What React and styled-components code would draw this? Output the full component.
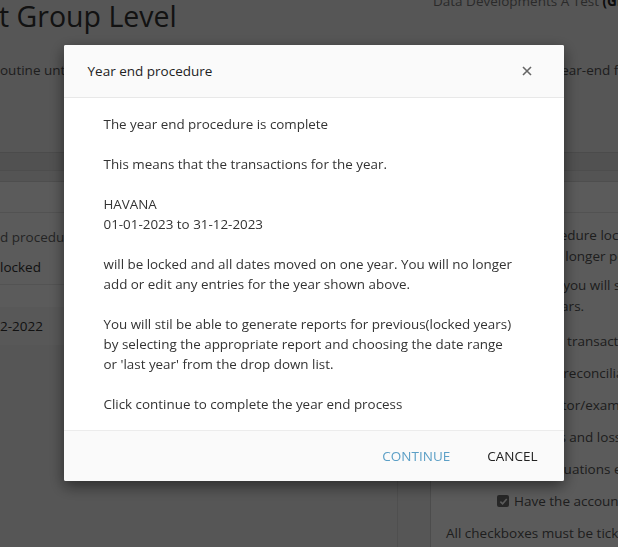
import React from 'react'
import styled, { createGlobalStyle } from 'styled-components'

const GlobalStyle = createGlobalStyle`
  html, body {
    margin: 0;
    padding: 0;
  }
  body {
    font-family: "Open Sans", "Liberation Sans", sans-serif;
    background: #f0f0f0;
    overflow: hidden;
  }
`

const Page = styled.div`
  width: 618px;
  height: 547px;
  overflow: hidden;
  background: #f0f0f0;
  color: #333;
  display: flex;
  flex-direction: column;
`

const TopBar = styled.div`
  height: 45px;
  flex: none;
  display: flex;
  justify-content: space-between;
  align-items: flex-start;
`

const PageTitle = styled.h1`
  margin: 0 0 0 -1px;
  font-size: 28.5px;
  font-weight: 400;
  line-height: 33px;
  color: #333;
  white-space: nowrap;
`

const Company = styled.div`
  width: 185px;
  margin-top: -9px;
  font-size: 13.5px;
  line-height: 20px;
  color: #777;
  white-space: nowrap;
  overflow: hidden;

  b {
    color: #222;
  }
`

const Intro = styled.div`
  height: 107px;
  flex: none;
  box-sizing: border-box;
  padding-top: 15px;
  display: grid;
  grid-template-columns: 466px 1fr;
  font-size: 13.5px;
  line-height: 20px;
  color: #555;
  white-space: nowrap;
  overflow: hidden;
`

const TabStrip = styled.div`
  height: 30px;
  flex: none;
  box-sizing: border-box;
  border-top: 1px solid #d2d2d2;
  border-bottom: 1px solid #dadada;
  background: linear-gradient(#e3e3e3 0 17px, #d9d9d9 17px 18px, #ececec 18px);
`

const Columns = styled.div`
  flex: 1;
  display: grid;
  grid-template-columns: 398px 32px 1fr;
  min-height: 0;
`

const LeftCol = styled.div`
  border-right: 1px solid #dcdcdc;
`

const Card = styled.div`
  background: #fff;
  font-size: 13.5px;
  color: #444;
  white-space: nowrap;
  overflow: hidden;
`

const CardHead = styled.div`
  height: 30px;
  border-bottom: 1px solid #e6e6e6;
`

const Row = styled.div`
  height: ${p => p.$h}px;
  line-height: ${p => p.$h}px;
  margin-top: ${p => p.$top || 0}px;
  background: ${p => (p.$shade ? '#f7f7f7' : 'transparent')};
  border-bottom: ${p => (p.$line ? '1px solid #e8e8e8' : 'none')};
  color: ${p => (p.$muted ? '#666' : '#333')};
`

const RightPanel = styled.div`
  background: #fff;
  border-left: 1px solid #d6d6d6;
  white-space: nowrap;
  overflow: hidden;
  font-size: 13.5px;
  color: #555;
`

const PanelHead = styled.div`
  height: 30px;
  border-bottom: 1px solid #e6e6e6;
`

const PanelText = styled.div`
  padding: 12px 0 0 15px;
  line-height: 21px;
`

const Para = styled.p`
  margin: 0 0 8px;
`

const CheckList = styled.div`
  margin-top: 7px;
`

const CheckItem = styled.label`
  display: flex;
  align-items: center;
  gap: 5px;
  height: 32px;
  padding-left: 51px;
`

const Box = styled.span`
  width: 12px;
  height: 12px;
  flex: none;
  border-radius: 2px;
  background: #6d6d6d;
  display: flex;
  align-items: center;
  justify-content: center;
`

const Note = styled.div`
  height: 32px;
  line-height: 32px;
`

const Overlay = styled.div`
  position: fixed;
  inset: 0;
  background: rgba(0, 0, 0, 0.645);
  display: flex;
  justify-content: center;
  align-items: flex-start;
  padding: 45px 0 0 9px;
`

const Modal = styled.div`
  width: 500px;
  background: #fff;
  border-radius: 2px;
  box-shadow: 0 5px 15px rgba(0, 0, 0, 0.5);
  overflow: hidden;
  color: #333;
`

const ModalHeader = styled.div`
  height: 53px;
  box-sizing: border-box;
  padding: 0 32px 0 24px;
  background: #fafafa;
  border-bottom: 1px solid #e8e8e8;
  display: flex;
  align-items: center;
  justify-content: space-between;
`

const ModalTitle = styled.h4`
  margin: 0;
  font-size: 13.5px;
  font-weight: 400;
  color: #222;
`

const CloseButton = styled.button`
  border: none;
  background: none;
  padding: 0;
  width: 10px;
  height: 10px;
  display: flex;
  cursor: pointer;
`

const ModalBody = styled.div`
  padding: 16px 40px 16px;
  font-size: 13.4px;
  line-height: 20px;
  color: #333;

  p {
    margin: 0 0 20px;
  }
  p:last-child {
    margin-bottom: 0;
  }
`

const ModalFooter = styled.div`
  height: 51px;
  box-sizing: border-box;
  padding-right: 10px;
  background: #fafafa;
  border-top: 1px solid #ececec;
  display: flex;
  justify-content: flex-end;
  align-items: center;
  gap: 5px;
`

const TextButton = styled.button`
  border: none;
  background: none;
  padding: 6px 16px;
  font-family: inherit;
  font-size: 13.5px;
  text-transform: uppercase;
  color: ${p => (p.$primary ? '#5b9fc6' : '#222')};
  cursor: pointer;
`

const checks = [
  'Have all transactions been entered',
  'Are the reconciliations complete',
  'An auditor/examiner has been appointed',
  'All gains and losses posted',
  'All revaluations entered',
]

export default function App() {
  return (
    <>
      <GlobalStyle />
      <Page>
        <TopBar>
          <PageTitle>t Group Level</PageTitle>
          <Company>
            Data Developments A Test <b>(Group)</b>
          </Company>
        </TopBar>
        <Intro>
          <div>outine until all the checks below have been completed</div>
          <div>Complete the year-end for this group</div>
        </Intro>
        <TabStrip />
        <Columns>
          <LeftCol>
            <Card>
              <CardHead />
              <Row $h={24} $top={12} $muted>d procedure</Row>
              <Row $h={20} $top={8}>locked</Row>
              <Row $h={7} $line />
              <Row $h={22} />
              <Row $h={38} $shade>2-2022</Row>
            </Card>
          </LeftCol>
          <div />
          <RightPanel>
            <PanelHead />
            <PanelText>
              <Para>
                The year end procedure locks the year
                <br />
                so that you can no longer post entries
              </Para>
              <Para>
                After the year end you will still
                <br />
                see all previous years.
              </Para>
              <CheckList>
                {checks.map(c => (
                  <CheckItem key={c}>
                    <Box />
                    {c}
                  </CheckItem>
                ))}
                <CheckItem>
                  <Box>
                    <svg width="9" height="9" viewBox="0 0 10 10">
                      <path d="M1.5 5.2 L4 7.6 L8.6 2.3" fill="none" stroke="#fff" strokeWidth="1.8" />
                    </svg>
                  </Box>
                  Have the accounts been approved
                </CheckItem>
              </CheckList>
              <Note>All checkboxes must be ticked to continue</Note>
            </PanelText>
          </RightPanel>
        </Columns>
      </Page>

      <Overlay>
        <Modal>
          <ModalHeader>
            <ModalTitle>Year end procedure</ModalTitle>
            <CloseButton aria-label="Close">
              <svg width="10" height="10" viewBox="0 0 10 10">
                <path d="M1 1 L9 9 M9 1 L1 9" stroke="#666" strokeWidth="1.6" />
              </svg>
            </CloseButton>
          </ModalHeader>
          <ModalBody>
            <p>The year end procedure is complete</p>
            <p>This means that the transactions for the year.</p>
            <p>
              HAVANA
              <br />
              01-01-2023 to 31-12-2023
            </p>
            <p>
              will be locked and all dates moved on one year. You will no longer
              <br />
              add or edit any entries for the year shown above.
            </p>
            <p>
              You will stil be able to generate reports for previous(locked years)
              <br />
              by selecting the appropriate report and choosing the date range
              <br />
              or 'last year' from the drop down list.
            </p>
            <p>Click continue to complete the year end process</p>
          </ModalBody>
          <ModalFooter>
            <TextButton $primary>Continue</TextButton>
            <TextButton>Cancel</TextButton>
          </ModalFooter>
        </Modal>
      </Overlay>
    </>
  )
}
